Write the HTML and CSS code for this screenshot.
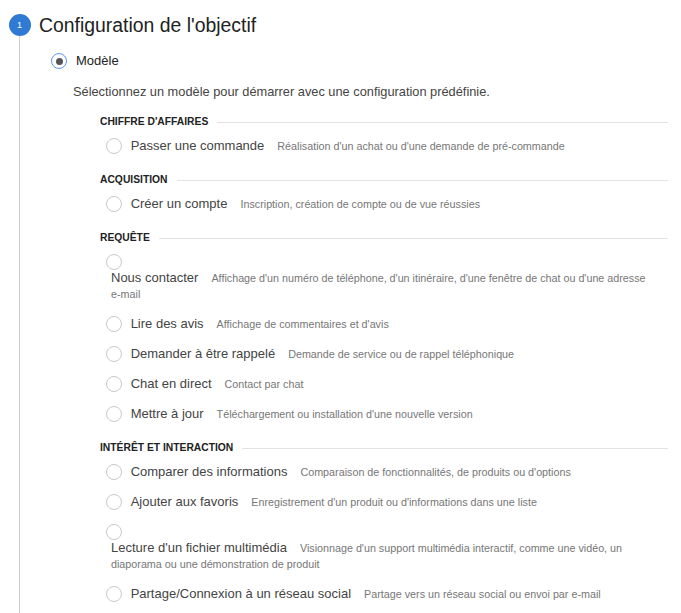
FILE: index.html
```html
<!DOCTYPE html>
<html lang="fr">
<head>
    <meta charset="UTF-8">
    <meta name="viewport" content="width=device-width, initial-scale=1.0">
    <title>Configuration de l'objectif</title>
    <link rel="stylesheet" href="styles.css">
</head>
<body>
    <div class="step">
        <div class="step-rail">
            <div class="step-num">1</div>
            <div class="rail-line"></div>
        </div>

        <div class="step-body">
            <h2 class="step-title">Configuration de l'objectif</h2>

            <div class="choice">
                <span class="radio checked"></span>
                <span class="choice-label">Modèle</span>
            </div>

            <p class="intro">Sélectionnez un modèle pour démarrer avec une configuration prédéfinie.</p>

            <div class="templates">
                <div class="group-title">CHIFFRE D'AFFAIRES</div>
                <div class="item"><span class="radio"></span> <span class="item-text"><span class="item-name">Passer une commande</span><span class="item-desc">Réalisation d'un achat ou d'une demande de pré-commande</span></span></div>

                <div class="group-title">ACQUISITION</div>
                <div class="item"><span class="radio"></span> <span class="item-text"><span class="item-name">Créer un compte</span><span class="item-desc">Inscription, création de compte ou de vue réussies</span></span></div>

                <div class="group-title">REQUÊTE</div>
                <div class="item"><span class="radio"></span> <span class="item-text"><span class="item-name">Nous contacter</span><span class="item-desc">Affichage d'un numéro de téléphone, d'un itinéraire, d'une fenêtre de chat ou d'une adresse <span class="nowrap">e-mail</span></span></span></div>
                <div class="item"><span class="radio"></span> <span class="item-text"><span class="item-name">Lire des avis</span><span class="item-desc">Affichage de commentaires et d'avis</span></span></div>
                <div class="item"><span class="radio"></span> <span class="item-text"><span class="item-name">Demander à être rappelé</span><span class="item-desc">Demande de service ou de rappel téléphonique</span></span></div>
                <div class="item"><span class="radio"></span> <span class="item-text"><span class="item-name">Chat en direct</span><span class="item-desc">Contact par chat</span></span></div>
                <div class="item"><span class="radio"></span> <span class="item-text"><span class="item-name">Mettre à jour</span><span class="item-desc">Téléchargement ou installation d'une nouvelle version</span></span></div>

                <div class="group-title">INTÉRÊT ET INTERACTION</div>
                <div class="item"><span class="radio"></span> <span class="item-text"><span class="item-name">Comparer des informations</span><span class="item-desc">Comparaison de fonctionnalités, de produits ou d'options</span></span></div>
                <div class="item"><span class="radio"></span> <span class="item-text"><span class="item-name">Ajouter aux favoris</span><span class="item-desc">Enregistrement d'un produit ou d'informations dans une liste</span></span></div>
                <div class="item"><span class="radio"></span> <span class="item-text"><span class="item-name">Lecture d'un fichier multimédia</span><span class="item-desc">Visionnage d'un support multimédia interactif, comme une vidéo, un diaporama ou une démonstration de produit</span></span></div>
                <div class="item"><span class="radio"></span> <span class="item-text"><span class="item-name">Partage/Connexion à un réseau social</span><span class="item-desc">Partage vers un réseau social ou envoi par <span class="nowrap">e-mail</span></span></span></div>
            </div>
        </div>
    </div>
</body>
</html>
```

FILE: styles.css
```css
body {
    margin: 0;
    font-family: "Liberation Sans", Arial, sans-serif;
    color: #444;
    background: #fff;
}

.step {
    display: flex;
    padding-top: 14px;
    min-height: 613px;
    box-sizing: border-box;
}

.step-rail {
    width: 39px;
    display: flex;
    flex-direction: column;
    align-items: center;
    flex-shrink: 0;
}

.step-num {
    width: 22px;
    height: 22px;
    border-radius: 50%;
    background: #2f7bd4;
    color: #fff;
    font-size: 9px;
    line-height: 22px;
    text-align: center;
}

.rail-line {
    flex: 1;
    width: 1px;
    background: #cfcfcf;
}

.step-body {
    flex: 1;
    padding-right: 13px;
}

.step-title {
    margin: 0;
    font-size: 19.4px;
    line-height: 22px;
    font-weight: normal;
    color: #222;
}

.choice {
    display: flex;
    align-items: center;
    margin: 17px 0 0 12px;
    line-height: 16px;
}

.choice-label {
    margin-left: 9px;
    font-size: 13px;
    color: #222;
}

.radio {
    display: inline-flex;
    align-items: center;
    justify-content: center;
    width: 14px;
    height: 14px;
    border: 1px solid #c9c9c9;
    border-radius: 50%;
    background: #fff;
    vertical-align: top;
}

.radio.checked {
    border-color: #5e96ee;
}

.radio.checked::after {
    content: "";
    width: 7px;
    height: 7px;
    border-radius: 50%;
    background: #555;
}

.intro {
    margin: 15px 0 0 34px;
    font-size: 12.8px;
    line-height: 16px;
    color: #444;
}

.templates {
    margin-left: 61px;
    padding-top: 3px;
}

.group-title {
    display: flex;
    align-items: center;
    margin: 12px 0 2px;
    font-size: 10.3px;
    line-height: 14px;
    font-weight: bold;
    color: #222;
}

.group-title::after {
    content: "";
    flex: 1;
    height: 1px;
    margin-left: 9px;
    background: #e3e3e3;
}

.item {
    margin-left: 6px;
    padding: 7px 0;
    font-size: 13px;
    line-height: 16px;
}

.item-text {
    display: inline-block;
    margin-left: 5px;
    vertical-align: top;
}

.item-name {
    color: #444;
}

.item-desc {
    margin-left: 13px;
    font-size: 10.75px;
    line-height: 12px;
    color: #777;
}

.nowrap {
    white-space: nowrap;
}
```
